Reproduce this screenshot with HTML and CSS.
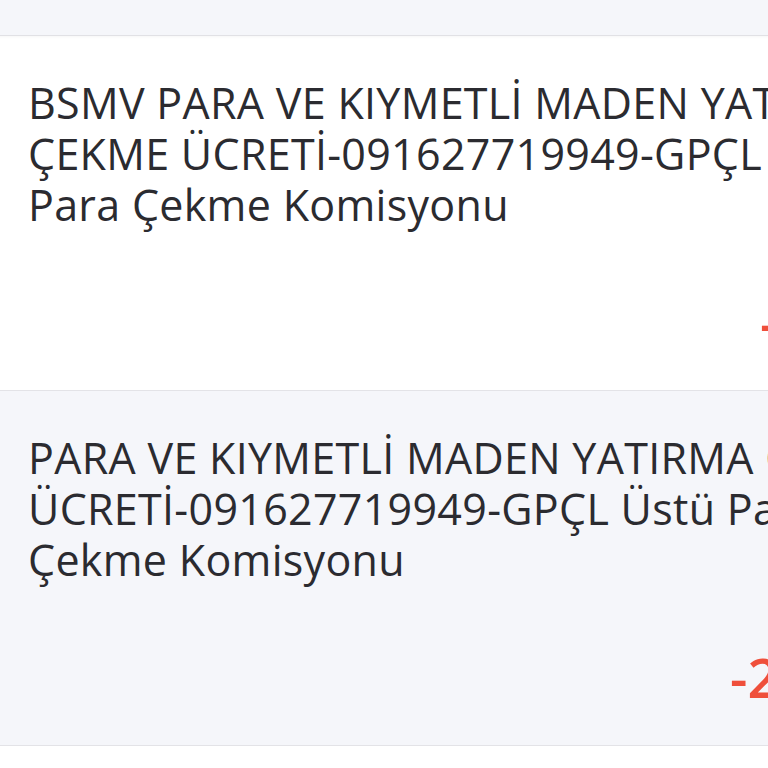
FILE: index.html
```html
<!DOCTYPE html>
<html lang="tr">
<head>
<meta charset="utf-8">
<title>Hareketler</title>
<link rel="stylesheet" href="styles.css">
</head>
<body>
<div class="page">
  <div class="topbar"></div>
  <div class="list">
    <div class="item item-white">
      <div class="desc">BSMV PARA VE KIYMETLİ MADEN YATIRMA<br>ÇEKME ÜCRETİ-091627719949-GPÇL Üstü<br>Para Çekme Komisyonu</div>
      <div class="amount amount-1">-1,17 TL</div>
    </div>
    <div class="item item-grey">
      <div class="desc">PARA VE KIYMETLİ MADEN YATIRMA ÇEKME<br>ÜCRETİ-091627719949-GPÇL Üstü Para<br>Çekme Komisyonu</div>
      <div class="amount amount-2">-23,40 TL</div>
    </div>
  </div>
</div>
</body>
</html>
```

FILE: styles.css
```css
html, body {
  margin: 0;
  padding: 0;
  background: #ffffff;
  overflow: hidden;
}

.page {
  width: 768px;
  height: 768px;
  overflow: hidden;
  font-family: "Open Sans", "Noto Sans", sans-serif;
  color: #2b2b30;
}

.topbar {
  height: 35px;
  background: #f5f6fa;
  border-bottom: 1px solid #e1e1e5;
}

.list {
  display: flex;
  flex-direction: column;
}

.item {
  height: 355px;
  box-sizing: border-box;
  border-bottom: 1px solid #e3e3e7;
  padding: 41px 0 0 28px;
  white-space: nowrap;
}

.item-white {
  background: #ffffff;
  box-shadow: inset 0 3px 3px -2px rgba(0, 0, 0, 0.04);
}

.item-grey {
  background: #f5f6fa;
}

.desc {
  font-size: 43px;
  line-height: 51px;
  font-weight: 400;
  letter-spacing: 0.3px;
}

.amount {
  margin-top: 62px;
  font-size: 54px;
  line-height: 60px;
  font-weight: 600;
  color: #ef4f3b;
}

.amount-1 {
  padding-left: 732px;
}

.amount-2 {
  padding-left: 702px;
}
```
